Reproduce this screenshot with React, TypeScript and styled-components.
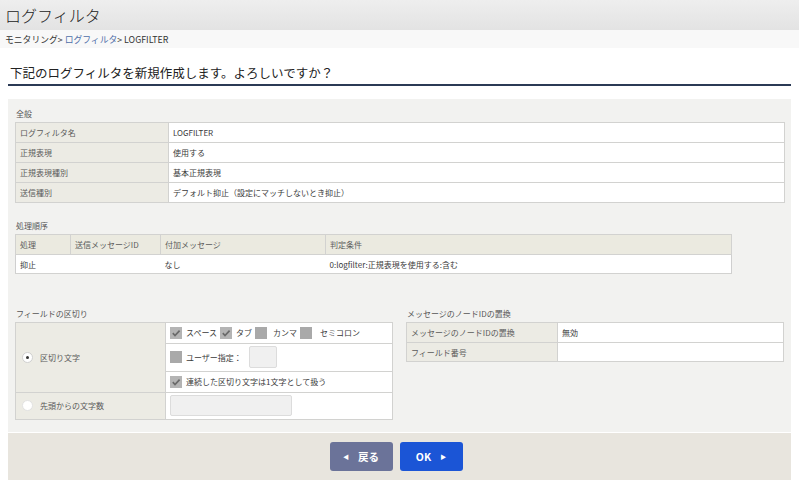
import styled, { createGlobalStyle } from "styled-components";

const GlobalStyle = createGlobalStyle`
  body {
    margin: 0;
    background: #fff;
    font-family: "Noto Sans CJK JP", "Noto Sans", sans-serif;
    color: #333;
  }
`;

const HeaderBar = styled.div`
  height: 30px;
  background: linear-gradient(#eeeeee, #e3e3e3);
  display: flex;
  align-items: center;
  padding-left: 5px;
`;

const PageTitle = styled.h1`
  margin: 0;
  font-size: 16px;
  font-weight: 300;
  color: #222;
  line-height: 1;
`;

const Breadcrumb = styled.div`
  height: 18px;
  background: #f8f8f8;
  font-size: 8.8px;
  padding-left: 5px;
  display: flex;
  align-items: center;
  color: #333;
  white-space: pre;
`;

const CrumbLink = styled.a`
  color: #4f6fa8;
  text-decoration: none;
`;

const Main = styled.div`
  padding: 0 8px;
`;

const Heading = styled.h2`
  margin: 0;
  padding: 14px 0 0 2px;
  font-size: 12.5px;
  line-height: 22px;
  font-weight: normal;
  color: #222;
  border-bottom: 2px solid #2b3a55;
`;

const Panel = styled.div`
  margin-top: 13px;
  background: #f2f2f0;
  padding: 0 6px 12px 7px;
`;

const SectionLabel = styled.div<{ $top: number }>`
  font-size: 8px;
  color: #555;
  padding: ${({ $top }) => $top}px 0 0 1px;
  height: 15px;
  line-height: 15px;
  margin-bottom: 1px;
`;

const Table = styled.table<{ $width: number }>`
  border-collapse: collapse;
  width: ${({ $width }) => $width}px;
  table-layout: fixed;
  font-size: 8px;
  background: #fff;
  border: 1px solid #cfcfcf;
`;

const LabelCell = styled.td<{ $h?: number }>`
  background: #ecebe4;
  color: #5a5a5a;
  border: 1px solid #d2d2d0;
  padding: 0 4px;
  height: ${({ $h }) => $h ?? 19}px;
  vertical-align: middle;
`;

const ValueCell = styled.td<{ $h?: number }>`
  background: #fff;
  color: #3a3a3a;
  border: 1px solid #d2d2d0;
  padding: 0 4px;
  height: ${({ $h }) => $h ?? 19}px;
  vertical-align: middle;
`;

const HeadCell = styled.th`
  background: #ebeae0;
  color: #5a5a5a;
  font-weight: normal;
  text-align: left;
  border: 1px solid #d2d2d0;
  padding: 0 4px;
  height: 19px;
`;

const PlainCell = styled.td`
  color: #3a3a3a;
  border-top: 1px solid #d2d2d0;
  border-bottom: 1px solid #d2d2d0;
  padding: 0 4px;
  height: 18px;
`;

const Columns = styled.div`
  display: flex;
  gap: 13px;
`;

const Column = styled.div<{ $width: number }>`
  flex: 0 0 ${({ $width }) => $width}px;
  width: ${({ $width }) => $width}px;
`;

const RadioRow = styled.div`
  display: flex;
  align-items: center;
  gap: 7px;
  padding-left: 2px;
`;

const Radio = styled.span<{ $on: boolean }>`
  width: 9px;
  height: 9px;
  border-radius: 50%;
  border: 1px solid ${({ $on }) => ($on ? "#d0d0d0" : "#e2e2e2")};
  background: #fff;
  display: inline-flex;
  align-items: center;
  justify-content: center;
  &::after {
    content: "";
    width: 3px;
    height: 3px;
    border-radius: 50%;
    background: ${({ $on }) => ($on ? "#333" : "transparent")};
  }
`;

const CheckLine = styled.div`
  display: flex;
  align-items: center;
  white-space: nowrap;
`;

const CheckItem = styled.span`
  display: inline-flex;
  align-items: center;
  gap: 4px;
  margin-right: 3px;
`;

const CheckLabel = styled.span<{ $pad?: number }>`
  padding-left: ${({ $pad }) => $pad ?? 0}px;
`;

const SmallInput = styled.span<{ $w: number; $h: number; $gap?: number }>`
  display: inline-block;
  width: ${({ $w }) => $w}px;
  height: ${({ $h }) => $h}px;
  background: #f0f0f0;
  border: 1px solid #dcdcdc;
  border-radius: 2px;
  margin-left: ${({ $gap }) => $gap ?? 4}px;
`;

const ButtonBar = styled.div`
  margin-top: 1px;
  height: 47px;
  background: #e8e5de;
  display: flex;
  align-items: center;
  justify-content: center;
  gap: 7px;
  padding-right: 7px;
`;

const Button = styled.button<{ $primary?: boolean }>`
  width: 63px;
  height: 29px;
  border: none;
  border-radius: 3px;
  background: ${({ $primary }) => ($primary ? "#1b55d6" : "#6b7399")};
  color: #fff;
  font-family: "Noto Sans CJK JP", sans-serif;
  font-size: 10.5px;
  font-weight: bold;
  display: flex;
  align-items: center;
  justify-content: center;
  gap: 9px;
  padding: 0;
`;

const Arrow = styled.span`
  font-size: 6px;
  line-height: 1;
`;

function Checkbox({ checked }: { checked: boolean }) {
  return (
    <svg width="12" height="12" viewBox="0 0 12 12">
      <rect width="12" height="12" fill={checked ? "#b4b4b4" : "#a9a9a9"} />
      {checked && <path d="M2.8 6.2 L5 8.5 L9.6 3.6" fill="none" stroke="#6a6a6a" strokeWidth="1.7" />}
    </svg>
  );
}

export default function App() {
  return (
    <>
      <GlobalStyle />
      <HeaderBar>
        <PageTitle>ログフィルタ</PageTitle>
      </HeaderBar>
      <Breadcrumb>
        {"モニタリング> "}
        <CrumbLink>ログフィルタ</CrumbLink>
        {"> LOGFILTER"}
      </Breadcrumb>
      <Main>
        <Heading>下記のログフィルタを新規作成します。よろしいですか？</Heading>
        <Panel>
          <SectionLabel $top={7}>全般</SectionLabel>
          <Table $width={770}>
            <colgroup>
              <col style={{ width: 153 }} />
              <col />
            </colgroup>
            <tbody>
              <tr>
                <LabelCell>ログフィルタ名</LabelCell>
                <ValueCell>LOGFILTER</ValueCell>
              </tr>
              <tr>
                <LabelCell>正規表現</LabelCell>
                <ValueCell>使用する</ValueCell>
              </tr>
              <tr>
                <LabelCell>正規表現種別</LabelCell>
                <ValueCell>基本正規表現</ValueCell>
              </tr>
              <tr>
                <LabelCell>送信種別</LabelCell>
                <ValueCell>デフォルト抑止（設定にマッチしないとき抑止）</ValueCell>
              </tr>
            </tbody>
          </Table>

          <SectionLabel $top={15}>処理順序</SectionLabel>
          <Table $width={717}>
            <colgroup>
              <col style={{ width: 55 }} />
              <col style={{ width: 90 }} />
              <col style={{ width: 165 }} />
              <col />
            </colgroup>
            <thead>
              <tr>
                <HeadCell>処理</HeadCell>
                <HeadCell>送信メッセージID</HeadCell>
                <HeadCell>付加メッセージ</HeadCell>
                <HeadCell>判定条件</HeadCell>
              </tr>
            </thead>
            <tbody>
              <tr>
                <PlainCell>抑止</PlainCell>
                <PlainCell></PlainCell>
                <PlainCell>なし</PlainCell>
                <PlainCell>0:logfilter:正規表現を使用する:含む</PlainCell>
              </tr>
            </tbody>
          </Table>

          <Columns>
            <Column $width={378}>
              <SectionLabel $top={32}>フィールドの区切り</SectionLabel>
              <Table $width={378}>
                <colgroup>
                  <col style={{ width: 150 }} />
                  <col />
                </colgroup>
                <tbody>
                  <tr>
                    <LabelCell rowSpan={3}>
                      <RadioRow>
                        <Radio $on={true} />
                        区切り文字
                      </RadioRow>
                    </LabelCell>
                    <ValueCell $h={19.5}>
                      <CheckLine>
                        <CheckItem>
                          <Checkbox checked />
                          <CheckLabel>スペース</CheckLabel>
                        </CheckItem>
                        <CheckItem>
                          <Checkbox checked />
                          <CheckLabel>タブ</CheckLabel>
                        </CheckItem>
                        <CheckItem>
                          <Checkbox checked={false} />
                          <CheckLabel $pad={2}>カンマ</CheckLabel>
                        </CheckItem>
                        <CheckItem>
                          <Checkbox checked={false} />
                          <CheckLabel $pad={4}>セミコロン</CheckLabel>
                        </CheckItem>
                      </CheckLine>
                    </ValueCell>
                  </tr>
                  <tr>
                    <ValueCell $h={27.5}>
                      <CheckLine>
                        <CheckItem>
                          <Checkbox checked={false} />
                          <CheckLabel>ユーザー指定：</CheckLabel>
                        </CheckItem>
                        <SmallInput $w={26} $h={20} />
                      </CheckLine>
                    </ValueCell>
                  </tr>
                  <tr>
                    <ValueCell $h={19.5}>
                      <CheckLine>
                        <CheckItem>
                          <Checkbox checked />
                          <CheckLabel>連続した区切り文字は1文字として扱う</CheckLabel>
                        </CheckItem>
                      </CheckLine>
                    </ValueCell>
                  </tr>
                  <tr>
                    <LabelCell $h={26.5}>
                      <RadioRow>
                        <Radio $on={false} />
                        先頭からの文字数
                      </RadioRow>
                    </LabelCell>
                    <ValueCell $h={26.5}>
                      <CheckLine>
                        <SmallInput $w={120} $h={19} $gap={0} />
                      </CheckLine>
                    </ValueCell>
                  </tr>
                </tbody>
              </Table>
            </Column>
            <Column $width={378}>
              <SectionLabel $top={32}>メッセージのノードIDの置換</SectionLabel>
              <Table $width={378}>
                <colgroup>
                  <col style={{ width: 151 }} />
                  <col />
                </colgroup>
                <tbody>
                  <tr>
                    <LabelCell>メッセージのノードIDの置換</LabelCell>
                    <ValueCell>無効</ValueCell>
                  </tr>
                  <tr>
                    <LabelCell $h={18}>フィールド番号</LabelCell>
                    <ValueCell $h={18}></ValueCell>
                  </tr>
                </tbody>
              </Table>
            </Column>
          </Columns>
        </Panel>
        <ButtonBar>
          <Button>
            <Arrow>◀</Arrow>
            戻る
          </Button>
          <Button $primary>
            OK
            <Arrow>▶</Arrow>
          </Button>
        </ButtonBar>
      </Main>
    </>
  );
}
